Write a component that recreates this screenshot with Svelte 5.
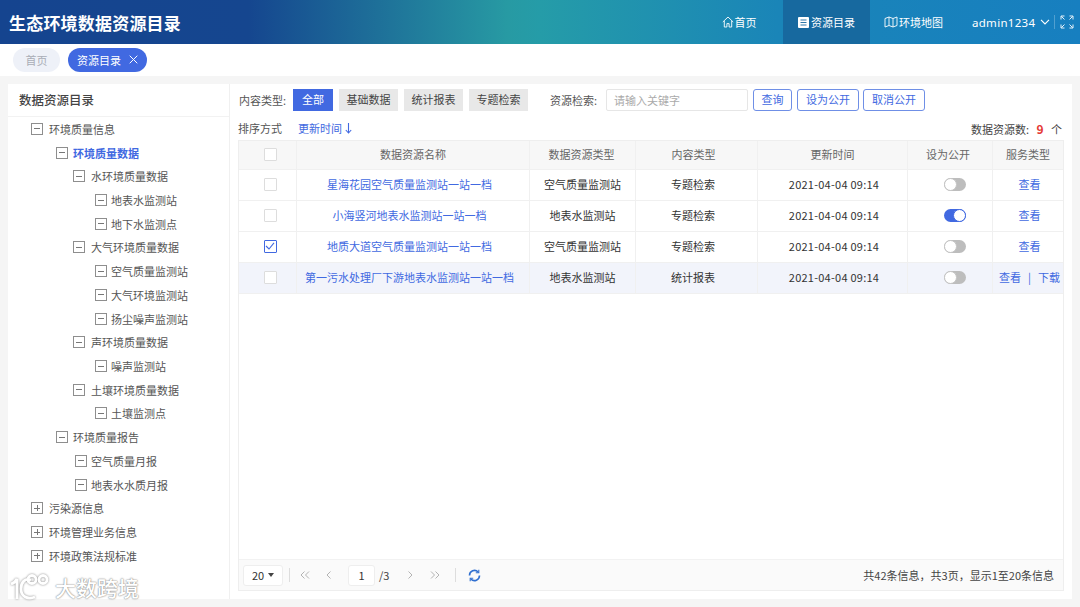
<script>
	const tree = [
		{ label: '环境质量信息', box: 31, text: 49 },
		{ label: '环境质量数据', box: 56, text: 73, active: true },
		{ label: '水环境质量数据', box: 73, text: 91 },
		{ label: '地表水监测站', box: 95, text: 111 },
		{ label: '地下水监测点', box: 95, text: 111 },
		{ label: '大气环境质量数据', box: 73, text: 91 },
		{ label: '空气质量监测站', box: 95, text: 111 },
		{ label: '大气环境监测站', box: 95, text: 111 },
		{ label: '扬尘噪声监测站', box: 95, text: 111 },
		{ label: '声环境质量数据', box: 73, text: 91 },
		{ label: '噪声监测站', box: 95, text: 111 },
		{ label: '土壤环境质量数据', box: 73, text: 91 },
		{ label: '土壤监测点', box: 95, text: 111 },
		{ label: '环境质量报告', box: 56, text: 73 },
		{ label: '空气质量月报', box: 75, text: 91 },
		{ label: '地表水水质月报', box: 75, text: 91 },
		{ label: '污染源信息', box: 31, text: 49, closed: true },
		{ label: '环境管理业务信息', box: 31, text: 49, closed: true },
		{ label: '环境政策法规标准', box: 31, text: 49, closed: true }
	];

	const rows = [
		{ name: '星海花园空气质量监测站一站一档', type: '空气质量监测站', content: '专题检索', on: false, checked: false },
		{ name: '小海竖河地表水监测站一站一档', type: '地表水监测站', content: '专题检索', on: true, checked: false },
		{ name: '地质大道空气质量监测站一站一档', type: '空气质量监测站', content: '专题检索', on: false, checked: true },
		{ name: '第一污水处理厂下游地表水监测站一站一档', type: '地表水监测站', content: '统计报表', on: false, checked: false, hover: true, download: true }
	];

	const heads = ['数据资源名称', '数据资源类型', '内容类型', '更新时间', '设为公开', '服务类型'];
</script>

<div class="page">
	<header class="topbar">
		<div class="title">生态环境数据资源目录</div>
		<nav class="nav">
			<div class="nav-item home">
				<svg width="12" height="12" viewBox="0 0 12 12" fill="none" stroke="currentColor" stroke-width="0.9"><path d="M0.8 6 6 1l5.2 5M2.3 5v6h2.6V7.600h2.200V11h2.600V5" /></svg>
				首页
			</div>
			<div class="nav-item res">
				<svg width="11" height="11" viewBox="0 0 11 11"><rect width="11" height="11" rx="1" fill="currentColor" /><path d="M2.500 3h6M2.500 5.500h6M2.500 8h6" stroke="#17699f" stroke-width="0.9" /></svg>
				资源目录
			</div>
			<div class="nav-item map">
				<svg width="14" height="12" viewBox="0 0 14 12" fill="none" stroke="currentColor" stroke-width="0.9"><path d="M1 2.500 5 1l4 1.500L13 1v8.500L9 11 5 9.500 1 11zM5 1v8.500M9 2.500V11" /></svg>
				环境地图
			</div>
			<div class="user">
				admin1234
				<svg width="10" height="6" viewBox="0 0 10 6" fill="none" stroke="currentColor" stroke-width="1.100"><path d="M1 .8 5 5l4-4.200" /></svg>
			</div>
			<div class="full">
				<svg width="14" height="14" viewBox="0 0 14 14" fill="none" stroke="currentColor" stroke-width="0.9"><path d="M1 4.500V1h3.500M9.500 1H13v3.500M13 9.500V13H9.500M4.500 13H1V9.500M1.500 1.500l3 3M12.500 1.500l-3 3M12.500 12.500l-3-3M1.500 12.500l3-3" /></svg>
			</div>
		</nav>
	</header>

	<div class="tabs">
		<span class="tab">首页</span>
		<span class="tab current">
			资源目录
			<svg width="9" height="9" viewBox="0 0 9 9" stroke="currentColor" stroke-width="1"><path d="M.7.7l7.600 7.600M8.300.7.700 8.300" /></svg>
		</span>
	</div>

	<main class="content">
		<aside class="side">
			<h2 class="side-title">数据资源目录</h2>
			<ul class="tree">
				{#each tree as node}
					<li class="node" class:active={node.active} style="--box: {node.box - 8}px; --gap: {node.text - node.box - 12}px">
						<span class="box">
							<i class="minus"></i>
							{#if node.closed}<i class="plus"></i>{/if}
						</span>
						<span>{node.label}</span>
					</li>
				{/each}
			</ul>
		</aside>

		<section class="panel">
			<div class="filters">
				<span class="label">内容类型:</span>
				<span class="chip on">全部</span>
				<span class="chip">基础数据</span>
				<span class="chip">统计报表</span>
				<span class="chip">专题检索</span>
				<span class="label search-label">资源检索:</span>
				<span class="search">请输入关键字</span>
				<span class="btn short">查询</span>
				<span class="btn">设为公开</span>
				<span class="btn">取消公开</span>
			</div>

			<div class="sortbar">
				<span class="sort-label">排序方式</span>
				<span class="sort-link">更新时间
					<svg width="7" height="11" viewBox="0 0 7 11" fill="none" stroke="currentColor" stroke-width="1.100"><path d="M3.500 0v10M.8 7l2.700 3 2.700-3" /></svg>
				</span>
				<span class="count">数据资源数: <b>9</b> 个</span>
			</div>

			<div class="table-wrap">
				<div class="tr thead">
					<div class="td"><span class="check"></span></div>
					{#each heads as head}
						<div class="td">{head}</div>
					{/each}
				</div>
				{#each rows as row}
					<div class="tr" class:hover={row.hover}>
						<div class="td">
							<span class="check" class:checked={row.checked}>
								{#if row.checked}
									<svg width="10" height="8" viewBox="0 0 10 8" fill="none" stroke="#4169e1" stroke-width="1.100"><path d="M1 4l3 3 5-6.200" /></svg>
								{/if}
							</span>
						</div>
						<div class="td link shift">{row.name}</div>
						<div class="td dark">{row.type}</div>
						<div class="td dark shift">{row.content}</div>
						<div class="td dark date">2021-04-04 09:14</div>
						<div class="td"><span class="switch" class:on={row.on}><i></i></span></div>
						<div class="td link service">
							查看
							{#if row.download}<span class="sep">|</span>下载{/if}
						</div>
					</div>
				{/each}
				<div class="spacer"></div>
				<div class="pager">
					<span class="size">20 <i class="caret"></i></span>
					<span class="divider"></span>
					<svg class="pg first" width="10" height="8" viewBox="0 0 10 8" fill="none"><path d="M4.500.5 1 4l3.500 3.500M9 .5 5.500 4 9 7.500" /></svg>
					<svg class="pg prev" width="5" height="8" viewBox="0 0 5 8" fill="none"><path d="M4.500.5 1 4l3.500 3.500" /></svg>
					<span class="page-no">1</span>
					<span class="total">/3</span>
					<svg class="pg next" width="5" height="8" viewBox="0 0 5 8" fill="none"><path d="M.5.500 4 4 .5 7.500" /></svg>
					<svg class="pg end" width="10" height="8" viewBox="0 0 10 8" fill="none"><path d="M1 .5 4.500 4 1 7.500M5.500.5 9 4 5.500 7.500" /></svg>
					<span class="divider last"></span>
					<svg width="13" height="13" viewBox="0 0 13 13" fill="none" stroke="#2f6fd0" stroke-width="1.600"><path d="M1.500 6.500a5 5 0 0 1 8.600-3.500M11.500 6.500a5 5 0 0 1-8.600 3.500" /><path d="M10.800.8v3h-3M2.200 12.200v-3h3" stroke-width="1.100" /></svg>
					<span class="summary">共42条信息&#65292;共3页&#65292;显示1至20条信息</span>
				</div>
			</div>
		</section>
	</main>

	<div class="watermark">
		<svg width="42" height="28" viewBox="0 0 42 28" fill="none" stroke="#fff" stroke-width="2.800"><path d="M2 11c3-1 5-3 6-5v20" /><path d="M22 7c-6-2-10 2-10 9 0 7 6 11 14 8" /><circle cx="23" cy="6.500" r="4" /><circle cx="34" cy="6.500" r="4" /></svg>
		<span>大数跨境</span>
	</div>
</div>

<style>
	:global(body) {
		margin: 0;
		background: #f5f5f5;
	}

	.page {
		position: relative;
		width: 1080px;
		height: 607px;
		overflow: hidden;
		font-family: 'Noto Sans CJK SC', 'Noto Sans', sans-serif;
		font-size: 11px;
		color: #444;
		background: #f5f5f5;
	}

	.topbar {
		height: 44px;
		display: flex;
		align-items: center;
		justify-content: space-between;
		padding-left: 9px;
		color: #fff;
		background: linear-gradient(90deg, #15448f 0%, #15468f 23%, #279aa3 47%, #259ca8 50%, #1a85b8 72%, #177fc0 100%);
	}

	.title {
		font-size: 17px;
		font-weight: 700;
		letter-spacing: 0.2px;
	}

	.nav {
		display: flex;
		height: 100%;
		align-items: center;
	}

	.nav-item {
		height: 100%;
		display: flex;
		align-items: center;
		justify-content: center;
		gap: 1px;
		font-size: 11px;
		box-sizing: border-box;
	}

	.home {
		width: 83px;
		padding-right: 5px;
	}

	.res {
		width: 87px;
		background: #17699f;
		gap: 2px;
	}

	.map {
		width: 87px;
	}

	.user {
		display: flex;
		align-items: center;
		gap: 5px;
		width: 97px;
		padding-left: 15px;
		box-sizing: border-box;
		font-family: 'Noto Sans', sans-serif;
		font-size: 11.500px;
		letter-spacing: 0.3px;
	}

	.full {
		display: flex;
		align-items: center;
		height: 14px;
		padding: 0 6px 0 5px;
		border-left: 1px solid rgba(255, 255, 255, 0.25);
	}

	.tabs {
		height: 32px;
		background: #fff;
		display: flex;
		align-items: center;
		gap: 8px;
		padding-left: 13px;
		padding-bottom: 1px;
		box-sizing: border-box;
	}

	.tab {
		height: 24px;
		width: 47px;
		display: flex;
		align-items: center;
		justify-content: center;
		border-radius: 12px;
		background: #eef1f8;
		color: #a9adb6;
	}

	.tab.current {
		width: 79px;
		gap: 8px;
		background: #4169e1;
		color: #fff;
	}

	.content {
		display: flex;
		padding: 8px 8px 0;
		height: 515px;
		box-sizing: border-box;
	}

	.side {
		width: 222px;
		background: #fff;
		border-right: 1px solid #f0f0f0;
		box-sizing: border-box;
		height: 515px;
	}

	.side-title {
		margin: 0;
		height: 32px;
		line-height: 31px;
		padding-left: 11px;
		font-size: 12.500px;
		font-weight: 500;
		color: #444;
		border-bottom: 1px solid #f2f2f2;
	}

	.tree {
		list-style: none;
		margin: 0;
		padding: 0;
	}

	.node {
		height: 23.720px;
		display: flex;
		align-items: center;
		padding-left: var(--box);
		color: #555;
		font-size: 11px;
	}

	.node span:last-child {
		margin-left: var(--gap);
	}

	.node.active {
		color: #4169e1;
		font-weight: 700;
	}

	.box {
		position: relative;
		flex: none;
		width: 10px;
		height: 10px;
		border: 1px solid #8e8e8e;
	}

	.box i {
		position: absolute;
		background: #777;
	}

	.minus {
		left: 2px;
		right: 2px;
		top: 4.500px;
		height: 1px;
	}

	.plus {
		top: 2px;
		bottom: 2px;
		left: 4.500px;
		width: 1px;
	}

	.panel {
		width: 842px;
		background: #fff;
		padding: 0 8px;
		box-sizing: border-box;
		display: flex;
		flex-direction: column;
		height: 515px;
	}

	.filters {
		display: flex;
		align-items: center;
		height: 32px;
		box-sizing: border-box;
		margin-left: 1px;
	}

	.label {
		width: 54px;
		color: #555;
		white-space: nowrap;
	}

	.chip {
		width: 59px;
		height: 22px;
		line-height: 21px;
		text-align: center;
		margin-right: 6px;
		background: #e8e8e8;
		color: #444;
	}

	.chip.on {
		width: 40px;
		background: #4169e1;
		color: #fff;
	}

	.search-label {
		width: 57px;
		margin-left: 16px;
	}

	.search {
		width: 142px;
		height: 22px;
		line-height: 20px;
		box-sizing: border-box;
		padding-left: 7px;
		margin-left: -1px;
		border: 1px solid #e6e6e6;
		border-radius: 2px;
		color: #aaa;
		margin-right: 5px;
	}

	.btn {
		width: 62px;
		height: 22px;
		line-height: 19px;
		text-align: center;
		box-sizing: border-box;
		border: 1px solid #6f8fe6;
		border-radius: 3px;
		color: #4169e1;
		margin-right: 4px;
	}

	.btn.short {
		width: 39px;
		margin-right: 5px;
	}

	.sortbar {
		display: flex;
		align-items: center;
		height: 24px;
		color: #555;
	}

	.sort-label {
		width: 60px;
	}

	.sort-link {
		display: flex;
		align-items: center;
		gap: 3px;
		color: #4169e1;
	}

	.count {
		margin-left: auto;
		margin-right: 2px;
		color: #444;
	}

	.count b {
		font-size: 12px;
		color: #e53935;
		margin: 0 5px 0 5px;
	}

	.table-wrap {
		flex: 1;
		display: flex;
		flex-direction: column;
		border: 1px solid #eee;
		border-top: 0;
		margin-bottom: 8px;
		width: 826px;
		box-sizing: border-box;
	}

	.tr {
		display: grid;
		grid-template-columns: 58px 233px 106px 122px 150px 85px 70px;
		height: 31px;
		border-bottom: 1px solid #f0f0f0;
		box-sizing: border-box;
	}

	.thead {
		height: 30px;
		background: #f7f7f7;
		border-top: 1px solid #eee;
		color: #666;
	}

	.td {
		display: flex;
		align-items: center;
		justify-content: center;
		border-right: 1px solid #f0f0f0;
		white-space: nowrap;
		min-width: 0;
		padding-bottom: 2px;
		box-sizing: border-box;
	}

	.td:last-child {
		border-right: 0;
	}

	.thead .td:nth-child(3) {
		padding-right: 2px;
	}

	.thead .td:nth-child(4) {
		padding-right: 6px;
	}

	.thead .td:nth-child(6) {
		padding-right: 4px;
	}

	.hover {
		background: #f2f4fb;
	}

	.link {
		color: #4169e1;
	}

	.dark {
		color: #333;
	}

	.shift {
		padding-right: 7px;
	}

	.date {
		letter-spacing: 0.25px;
		padding-left: 3px;
	}

	.service {
		padding-left: 3px;
	}

	.sep {
		margin: 0 7px;
	}

	.check {
		width: 11px;
		height: 11px;
		margin-left: 5px;
		display: flex;
		align-items: center;
		justify-content: center;
		border: 1px solid #ddd;
		border-radius: 1px;
		background: #fff;
	}

	.check.checked {
		border-color: #4169e1;
	}

	.switch {
		position: relative;
		width: 22px;
		height: 13px;
		margin-left: 9px;
		border-radius: 7px;
		background: #bdbdbd;
	}

	.switch i {
		position: absolute;
		left: 0;
		top: 0;
		width: 11px;
		height: 11px;
		border-radius: 50%;
		background: #fff;
		border: 1px solid #c4c4c4;
	}

	.switch.on {
		background: #4169e1;
	}

	.switch.on i {
		left: 9px;
		border-color: #4169e1;
	}

	.spacer {
		flex: 1;
	}

	.pager {
		height: 31px;
		display: flex;
		align-items: center;
		background: #fafafa;
		padding-left: 4px;
		border-top: 1px solid #f2f2f2;
		box-sizing: border-box;
	}

	.size {
		width: 40px;
		height: 21px;
		display: flex;
		align-items: center;
		gap: 4px;
		padding-left: 8px;
		box-sizing: border-box;
		border: 1px solid #eee;
		border-radius: 3px;
		background: #fff;
		color: #333;
	}

	.caret {
		width: 0;
		height: 0;
		border: 3px solid transparent;
		border-top: 4px solid #444;
		border-bottom: 0;
	}

	.divider {
		flex: none;
		width: 1px;
		height: 14px;
		background: #ddd;
		margin: 0 10px 0 6px;
	}

	.divider.last {
		margin: 0 12px 0 15px;
	}

	.pg {
		flex: none;
		stroke: #aaa;
		stroke-width: 0.9;
	}

	.prev {
		margin-left: 16px;
	}

	.page-no {
		width: 27px;
		height: 21px;
		line-height: 19px;
		text-align: center;
		box-sizing: border-box;
		border: 1px solid #eee;
		border-radius: 3px;
		background: #fff;
		color: #333;
		margin-left: 17px;
	}

	.total {
		width: 29px;
		margin-left: 4px;
		color: #444;
	}

	.end {
		margin-left: 17px;
	}

	.summary {
		margin-left: auto;
		margin-right: 9px;
		color: #444;
	}

	.watermark {
		position: absolute;
		left: 9px;
		bottom: 5px;
		display: flex;
		align-items: center;
		gap: 4px;
		color: #fff;
		font-size: 21px;
		font-weight: 500;
		text-shadow: 0 0 2px #8a8a8a, 0 0 1px #8a8a8a;
	}

	.watermark svg {
		filter: drop-shadow(0 0 1px #8a8a8a);
	}
</style>
